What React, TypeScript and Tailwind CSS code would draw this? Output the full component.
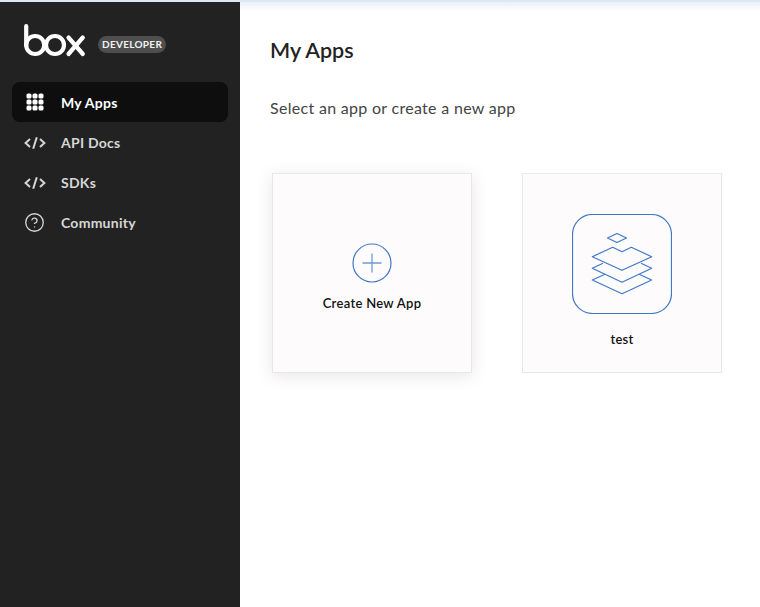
import { HelpCircle } from "lucide-react";

const font = { lato: "font-['Lato',sans-serif]" };

function GridIcon() {
  const cells = [0.5, 6.5, 12.5];
  return (
    <svg width="18" height="18" viewBox="0 0 18 18" fill="#fff">
      {cells.map((y) =>
        cells.map((x) => <rect key={`${x}-${y}`} x={x} y={y} width="5" height="5" rx="1.6" />)
      )}
    </svg>
  );
}

function CodeIcon() {
  return (
    <svg className="mt-[1px]" width="22" height="14" viewBox="0 0 22 14" fill="none" stroke="#d6d6d6" strokeWidth="2">
      <path d="M6 3 1.6 7 6 11" />
      <path d="M16 3l4.4 4-4.4 4" />
      <path d="M12.8 1.2 9.2 12.8" />
    </svg>
  );
}

function BoxLogo() {
  return (
    <svg width="62" height="33" viewBox="0 0 62 33" fill="none" stroke="#fff" strokeWidth="4.2" strokeLinecap="round">
      <path d="M2.2 2.2v19" />
      <circle cx="11.2" cy="21" r="9" />
      <circle cx="31" cy="21" r="9" />
      <path d="M44.5 13.5 58.8 30" />
      <path d="M58.8 13.5 44.5 30" />
    </svg>
  );
}

function PlusCircle() {
  return (
    <svg width="40" height="40" viewBox="0 0 40 40" fill="none" stroke="#3f78c9">
      <circle cx="20" cy="20" r="19" strokeWidth="1.2" />
      <path d="M20 10.5v19M10.5 20h19" strokeWidth="1.3" stroke="#6f9bd8" />
    </svg>
  );
}

function AppIcon() {
  return (
    <svg width="100" height="100" viewBox="0 0 100 100" fill="none" stroke="#3f78c9" strokeWidth="1.2" strokeLinejoin="round">
      <rect x="0.5" y="0.5" width="99" height="99" rx="20" />
      <path d="M35.5 24 45 19.5 54.5 24 45 28.5z" />
      <path d="M20.3 42.7 40.7 33.3 50 37.7 59.3 33.3 79.7 42.7 50 56.3z" />
      <path d="M31 49.3 20.3 54.3 50 68.3 79.7 54.3 69 49.3" />
      <path d="M33 60.3 20.3 66 50 79.7 79.7 66 67 60.3" />
    </svg>
  );
}

const navItems = [
  { label: "API Docs", icon: <CodeIcon /> },
  { label: "SDKs", icon: <CodeIcon /> },
  { label: "Community", icon: <HelpCircle size={21} strokeWidth={1.5} color="#d6d6d6" /> },
];

export default function App() {
  return (
    <div className={`${font.lato} flex h-[607px] w-[760px] flex-col overflow-hidden bg-white`}>
      <div className="h-[2px] shrink-0 bg-[#dce9f5]" />
      <div className="flex min-h-0 flex-1">
        <aside className="w-[240px] shrink-0 bg-[#222222] px-3">
          <div className="flex h-[80px] items-start pl-3 pt-[22px]">
            <BoxLogo />
            <span className="ml-3 mt-3 rounded-full bg-[#4e4e4e] px-1 py-[2px] text-[10px] leading-[13px] font-bold tracking-[0.3px] text-[#f2f2f2]">
              DEVELOPER
            </span>
          </div>
          <nav className="flex flex-col">
            <div className="flex h-10 items-center rounded-lg bg-[#0e0e0e]">
              <span className="mr-1 flex w-[45px] justify-center">
                <GridIcon />
              </span>
              <span className="pt-[2px] text-sm font-bold tracking-[0.25px] text-white">My Apps</span>
            </div>
            {navItems.map((item) => (
              <div key={item.label} className="flex h-10 items-center">
                <span className="mr-1 flex w-[45px] justify-center">{item.icon}</span>
                <span className="pt-[2px] text-sm font-bold tracking-[0.25px] text-[#d6d6d6]">{item.label}</span>
              </div>
            ))}
          </nav>
        </aside>
        <main className="min-w-0 flex-1 bg-gradient-to-b from-[#e8eff6] from-0% to-white to-[9px] pl-[30px] pt-[35px]">
          <h1 className="text-[21.5px] leading-[26px] font-semibold text-[#222222]">My Apps</h1>
          <p className="mt-[35px] text-base leading-5 tracking-[0.3px] text-[#444444]">
            Select an app or create a new app
          </p>
          <div className="ml-[2px] mt-[55px] flex gap-[50px]">
            <div className="flex h-[200px] w-[200px] flex-col items-center border border-[#e8e8e8] bg-[#fdfbfc] pt-[69px] shadow-[0_3px_16px_rgba(0,0,0,0.1)]">
              <PlusCircle />
              <span className="mt-[11px] text-[13px] leading-[18px] font-semibold tracking-[0.3px] text-[#111111]">Create New App</span>
            </div>
            <div className="flex h-[200px] w-[200px] flex-col items-center border border-[#e8e8e8] bg-[#fdfbfc] pt-[40px]">
              <AppIcon />
              <span className="mt-4 text-[13px] leading-[18px] font-semibold tracking-[0.3px] text-[#111111]">test</span>
            </div>
          </div>
        </main>
      </div>
    </div>
  );
}
